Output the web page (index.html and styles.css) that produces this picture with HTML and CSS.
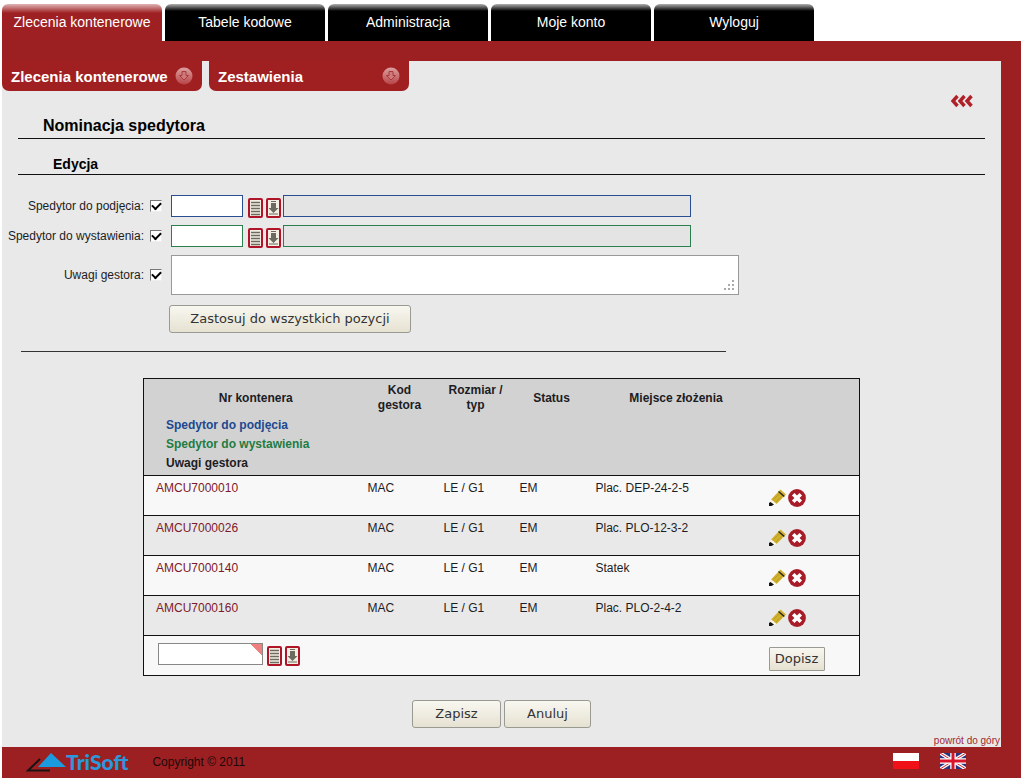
FILE: index.html
```
<!DOCTYPE html>
<html lang="pl">
<head>
<meta charset="utf-8">
<title>Nominacja spedytora</title>
<link rel="stylesheet" href="styles.css">
</head>
<body>
<svg class="sprites" aria-hidden="true">
  <symbol id="list" viewBox="0 0 15 20">
    <rect x="1" y="1" width="13" height="18" rx="1" fill="#f4eee4" stroke="#b01428" stroke-width="2"/>
    <path d="M3 4.500h9M3 7.500h9M3 10.500h9M3 13.500h9M3 16.500h9" stroke="#6b6b60" stroke-width="1.300"/>
  </symbol>
  <symbol id="down" viewBox="0 0 15 20">
    <rect x="1" y="1" width="13" height="18" rx="1" fill="#f4eee4" stroke="#b01428" stroke-width="2"/>
    <path d="M5 5h5v5h2.500l-5 5-5-5H5z" fill="#6b6b60"/>
    <path d="M3 16h9M5 3.500h5" stroke="#6b6b60"/>
  </symbol>
  <symbol id="pencil" viewBox="0 0 17 17">
    <path d="M2 10.500L11.500 .5 17 5.500 7.500 15z" fill="#d0b02c"/>
    <path d="M2 10.500L7.500 15 2.500 16 1 14z" fill="#fdfbe8"/>
    <path d="M0 17v-3l1.500-1L5 15.500 2.500 17z" fill="#111"/>
    <path d="M9.500 2.500L15.300 7.500" stroke="#222" stroke-width="1.400"/>
    <path d="M4.500 10.500L10 5M7 13l6-6" stroke="#b2921c" stroke-width=".7"/>
  </symbol>
  <symbol id="remove" viewBox="0 0 18 18">
    <circle cx="9" cy="9" r="8.900" fill="#a81c28"/>
    <path d="M5.200 5.200l7.600 7.600M12.800 5.200l-7.600 7.600" stroke="#fff" stroke-width="3.600"/>
  </symbol>
  <symbol id="drop" viewBox="0 0 18 18">
    <circle cx="9" cy="9" r="8.500" fill="url(#ball)"/>
    <path d="M7 4.500h4v4h2.500L9 13 4.500 8.500H7z" fill="#cc7a7c" stroke="#a83a3e"/>
  </symbol>
  <linearGradient id="ball" x2="0" y2="1"><stop stop-color="#dca0a0"/><stop offset="1" stop-color="#b84448"/></linearGradient>
</svg>
<div class="page">
  <nav class="tabs">
    <a class="tab active" href="#">Zlecenia kontenerowe</a>
    <a class="tab" href="#">Tabele kodowe</a>
    <a class="tab" href="#">Administracja</a>
    <a class="tab" href="#">Moje konto</a>
    <a class="tab" href="#">Wyloguj</a>
  </nav>
  <main class="frame">
    <nav class="submenu">
      <a href="#">Zlecenia kontenerowe <svg width="18" height="18"><use href="#drop"/></svg></a>
      <a href="#">Zestawienia <svg width="18" height="18"><use href="#drop"/></svg></a>
    </nav>
    <a class="back" href="#" aria-label="Wstecz">
      <svg width="24" height="14" viewBox="0 0 24 14"><path d="M7.500 2L3 7l4.500 5M14.500 2L10 7l4.500 5M21.500 2L17 7l4.500 5" fill="none" stroke="#b02028" stroke-width="3.400"/></svg>
    </a>
    <h1>Nominacja spedytora</h1>
    <h2>Edycja</h2>
    <form>
      <div class="fields">
        <label for="c1">Spedytor do podjęcia:</label>
        <input type="checkbox" id="c1" checked>
        <div class="picker blue">
          <input class="code" type="text" aria-label="Kod spedytora do podjęcia">
          <button class="icon" type="button" aria-label="Lista"><svg width="15" height="20"><use href="#list"/></svg></button>
          <button class="icon" type="button" aria-label="Pobierz"><svg width="15" height="20"><use href="#down"/></svg></button>
          <input class="name" type="text" readonly aria-label="Nazwa spedytora do podjęcia">
        </div>
        <label for="c2">Spedytor do wystawienia:</label>
        <input type="checkbox" id="c2" checked>
        <div class="picker green">
          <input class="code" type="text" aria-label="Kod spedytora do wystawienia">
          <button class="icon" type="button" aria-label="Lista"><svg width="15" height="20"><use href="#list"/></svg></button>
          <button class="icon" type="button" aria-label="Pobierz"><svg width="15" height="20"><use href="#down"/></svg></button>
          <input class="name" type="text" readonly aria-label="Nazwa spedytora do wystawienia">
        </div>
        <label for="c3">Uwagi gestora:</label>
        <input type="checkbox" id="c3" checked>
        <div class="notes">
          <textarea aria-label="Uwagi gestora"></textarea>
          <svg class="grip" width="11" height="11"><path d="M0 9h2v2H0zM4 9h2v2H4zM8 9h2v2H8zM4 5h2v2H4zM8 5h2v2H8zM8 1h2v2H8z" fill="#aaa"/></svg>
        </div>
        <button class="btn apply" type="button">Zastosuj do wszystkich pozycji</button>
      </div>
      <hr>
      <table>
        <colgroup><col class="c-nr"><col class="c-s"><col class="c-s"><col class="c-s"><col class="c-place"><col></colgroup>
        <thead>
          <tr><th class="nr">Nr kontenera</th><th>Kod gestora</th><th>Rozmiar / typ</th><th>Status</th><th>Miejsce złożenia</th><th></th></tr>
          <tr><th class="legend" colspan="6"><div class="t-blue">Spedytor do podjęcia</div><div class="t-green">Spedytor do wystawienia</div><div>Uwagi gestora</div></th></tr>
        </thead>
        <tbody>
          <tr><td><a href="#">AMCU7000010</a></td><td>MAC</td><td>LE / G1</td><td>EM</td><td>Plac. DEP-24-2-5</td><td class="actions"><button class="icon" type="button" aria-label="Edytuj"><svg width="17" height="17"><use href="#pencil"/></svg></button><button class="icon" type="button" aria-label="Usuń"><svg width="18" height="18"><use href="#remove"/></svg></button></td></tr>
          <tr><td><a href="#">AMCU7000026</a></td><td>MAC</td><td>LE / G1</td><td>EM</td><td>Plac. PLO-12-3-2</td><td class="actions"><button class="icon" type="button" aria-label="Edytuj"><svg width="17" height="17"><use href="#pencil"/></svg></button><button class="icon" type="button" aria-label="Usuń"><svg width="18" height="18"><use href="#remove"/></svg></button></td></tr>
          <tr><td><a href="#">AMCU7000140</a></td><td>MAC</td><td>LE / G1</td><td>EM</td><td>Statek</td><td class="actions"><button class="icon" type="button" aria-label="Edytuj"><svg width="17" height="17"><use href="#pencil"/></svg></button><button class="icon" type="button" aria-label="Usuń"><svg width="18" height="18"><use href="#remove"/></svg></button></td></tr>
          <tr><td><a href="#">AMCU7000160</a></td><td>MAC</td><td>LE / G1</td><td>EM</td><td>Plac. PLO-2-4-2</td><td class="actions"><button class="icon" type="button" aria-label="Edytuj"><svg width="17" height="17"><use href="#pencil"/></svg></button><button class="icon" type="button" aria-label="Usuń"><svg width="18" height="18"><use href="#remove"/></svg></button></td></tr>
        </tbody>
        <tfoot>
          <tr>
            <td colspan="5"><div class="picker">
              <input class="container-no" type="text" required aria-label="Nr kontenera">
              <button class="icon" type="button" aria-label="Lista"><svg width="15" height="20"><use href="#list"/></svg></button>
              <button class="icon" type="button" aria-label="Pobierz"><svg width="15" height="20"><use href="#down"/></svg></button>
            </div></td>
            <td class="add"><button class="btn small" type="button">Dopisz</button></td>
          </tr>
        </tfoot>
      </table>
      <div class="buttons">
        <button class="btn save" type="button">Zapisz</button>
        <button class="btn cancel" type="button">Anuluj</button>
      </div>
    </form>
    <a class="top" href="#">powrót do góry</a>
  </main>
  <footer>
    <a class="logo" href="#">
      <svg width="40" height="20" viewBox="0 0 40 20"><path d="M25 1L40 15H12z" fill="#1c9ae0"/><path d="M14 7L2 18.500h22M14 7l-2 2" fill="none" stroke="#1a1212" stroke-width="2"/></svg>
      <span>TriSoft</span>
    </a>
    <span class="copy">Copyright © 2011</span>
    <div class="langs">
      <a href="#" aria-label="Polski"><svg width="26" height="16"><path fill="#fff" d="M0 0h26v8H0z"/><path fill="#f01018" d="M0 8h26v8H0z"/></svg></a>
      <a href="#" aria-label="English"><svg width="26" height="16"><path fill="#26357e" d="M0 0h26v16H0z"/><path d="M0 0l26 16M26 0L0 16" stroke="#fff" stroke-width="3.500"/><path d="M0 0l26 16M26 0L0 16" stroke="#d8202c"/><path d="M13 0v16M0 8h26" stroke="#fff" stroke-width="5.500"/><path d="M13 0v16M0 8h26" stroke="#d8142c" stroke-width="3"/></svg></a>
    </div>
  </footer>
</div>
</body>
</html>
```
FILE: styles.css
```
* { box-sizing: border-box; }
body { margin: 0; background: #fff; color: #1c1c24; font: 12px/15px "Liberation Sans", Arial, sans-serif; }
a { text-decoration: none; }
svg { display: block; }
.sprites { position: absolute; width: 0; height: 0; }
.page { padding: 4px 3px 3px 2px; }

.tabs { display: flex; gap: 3px; }
.tab {
  width: 160px; height: 37px; padding-top: 9px;
  border-radius: 6px 6px 0 0;
  background: linear-gradient(#b0b0b0, #000 7px);
  color: #fff; font-size: 14px; line-height: 18px; text-align: center;
}
.tab.active { background: linear-gradient(#e0b4b4, #9e2023 9px); }

.frame { display: flex; flex-direction: column; border: solid #9c2022; border-width: 20px 20px 0 0; background: #e9e9e9; }
.submenu { display: flex; gap: 7px; }
.submenu a {
  display: flex; align-items: center; justify-content: space-between;
  width: 200px; height: 30px; padding: 0 9px;
  border-radius: 0 0 7px 7px; background: #a02022;
  color: #fff; font-size: 15px; font-weight: bold;
}
.back { align-self: flex-end; margin: 3px 27px 0 0; }
h1, h2 { margin: 0 16px; border-bottom: 1px solid #111; color: #000; font-weight: bold; }
h1 { padding: 8px 25px 3px; font-size: 16px; line-height: 19px; }
h2 { padding: 16px 35px 1px; font-size: 14px; line-height: 18px; }

.fields { display: grid; grid-template-columns: 142px 18px minmax(0, 1fr); row-gap: 8px; align-items: center; padding-top: 20px; }
.fields > label { text-align: right; white-space: nowrap; }
.fields > input { width: 12px; height: 12px; margin: 0 0 0 6px; }
.fields > :nth-child(3n) { margin-left: 9px; }
input[type="checkbox"] {
  appearance: none; border: 1px solid; border-color: #777 #eee #eee #777;
  background: #fff;
  display: grid; place-items: center;
}
input[type="checkbox"]:checked::before { content: ""; width: 7px; height: 4px; margin-bottom: 2px; border: solid #000; border-width: 0 0 2px 2px; transform: rotate(-45deg); }
.picker { display: flex; gap: 3px; align-items: flex-start; height: 22px; }
.picker input { height: 22px; border: 1px solid #888; background: #fff; }
.picker .code { width: 72px; margin-right: 2px; }
.picker .name { width: 408px; margin-left: -1px; background: #e4e4e4; }
.picker.blue input { border-color: #2a4f90; }
.picker.green input { border-color: #2a7f4c; }
.icon { display: block; padding: 0; border: 0; background: none; }
.picker .icon { margin-top: 3px; }
.notes { display: grid; width: 568px; }
textarea { grid-area: 1 / 1; height: 40px; border: 1px solid #999; background: #fff; resize: none; }
.grip { grid-area: 1 / 1; align-self: end; justify-self: end; margin: 0 4px 5px 0; pointer-events: none; }
.btn {
  height: 28px; padding: 0; border: 1px solid #9a9a92; border-radius: 3px;
  background: linear-gradient(#f8f7f0, #e6e2d2);
  color: #333; font: 13px/16px "DejaVu Sans", Verdana, sans-serif;
}
.apply { grid-column: 1 / -1; justify-self: start; width: 242px; margin: 2px 0 0 167px; }
hr { width: 705px; margin: 18px 19px 0; border: 0; border-top: 1px solid #333; }

table { width: 717px; margin: 26px auto 0; border: 1px solid #111; border-collapse: collapse; table-layout: fixed; }
.c-nr { width: 218px; }
.c-s { width: 76px; }
.c-place { width: 173px; }
thead { background: #d2d2d2; }
th { height: 37px; padding: 2px 6px 0; vertical-align: middle; }
th.nr { padding-left: 12px; }
.legend { height: 59px; padding: 0 22px 2px; text-align: left; line-height: 19px; }
.t-blue { color: #204890; }
.t-green { color: #1f7c42; }
td { height: 40px; padding: 5px 6px 0; vertical-align: top; border-top: 1px solid #111; }
td:first-child { padding-left: 12px; }
tbody tr { background: #f8f8f8; }
tbody tr:nth-child(even) { background: #e9e9e9; }
td a { color: #7c1a2c; }
td.actions { padding-top: 13px; }
.actions .icon { display: inline-block; vertical-align: top; margin-right: 2px; }
tfoot { background: #f8f8f8; }
tfoot td { padding-top: 7px; }
tfoot td:first-child { padding-left: 14px; }
tfoot td.add { padding-top: 11px; }
.picker .container-no { width: 105px; margin-right: 1px; background: linear-gradient(45deg, #fff calc(100% - 8px), #ee8080 calc(100% - 8px)); }
.small { display: block; width: 56px; height: 24px; border-radius: 1px; }

.buttons { display: flex; justify-content: center; gap: 3px; margin-top: 24px; }
.save { width: 89px; }
.cancel { width: 87px; }
.top { align-self: flex-end; margin: 6px 1px 0 0; color: #a02830; font-size: 10px; line-height: 13px; }

footer { display: flex; align-items: center; height: 31px; padding: 0 55px 0 24px; background: #9c2022; color: #200808; }
.logo { display: flex; align-items: center; color: #2b98dc; font: 900 21px/24px Lato, sans-serif; }
.copy { margin-left: 24px; }
.langs { display: flex; gap: 21px; margin: 0 0 2px auto; }
```
